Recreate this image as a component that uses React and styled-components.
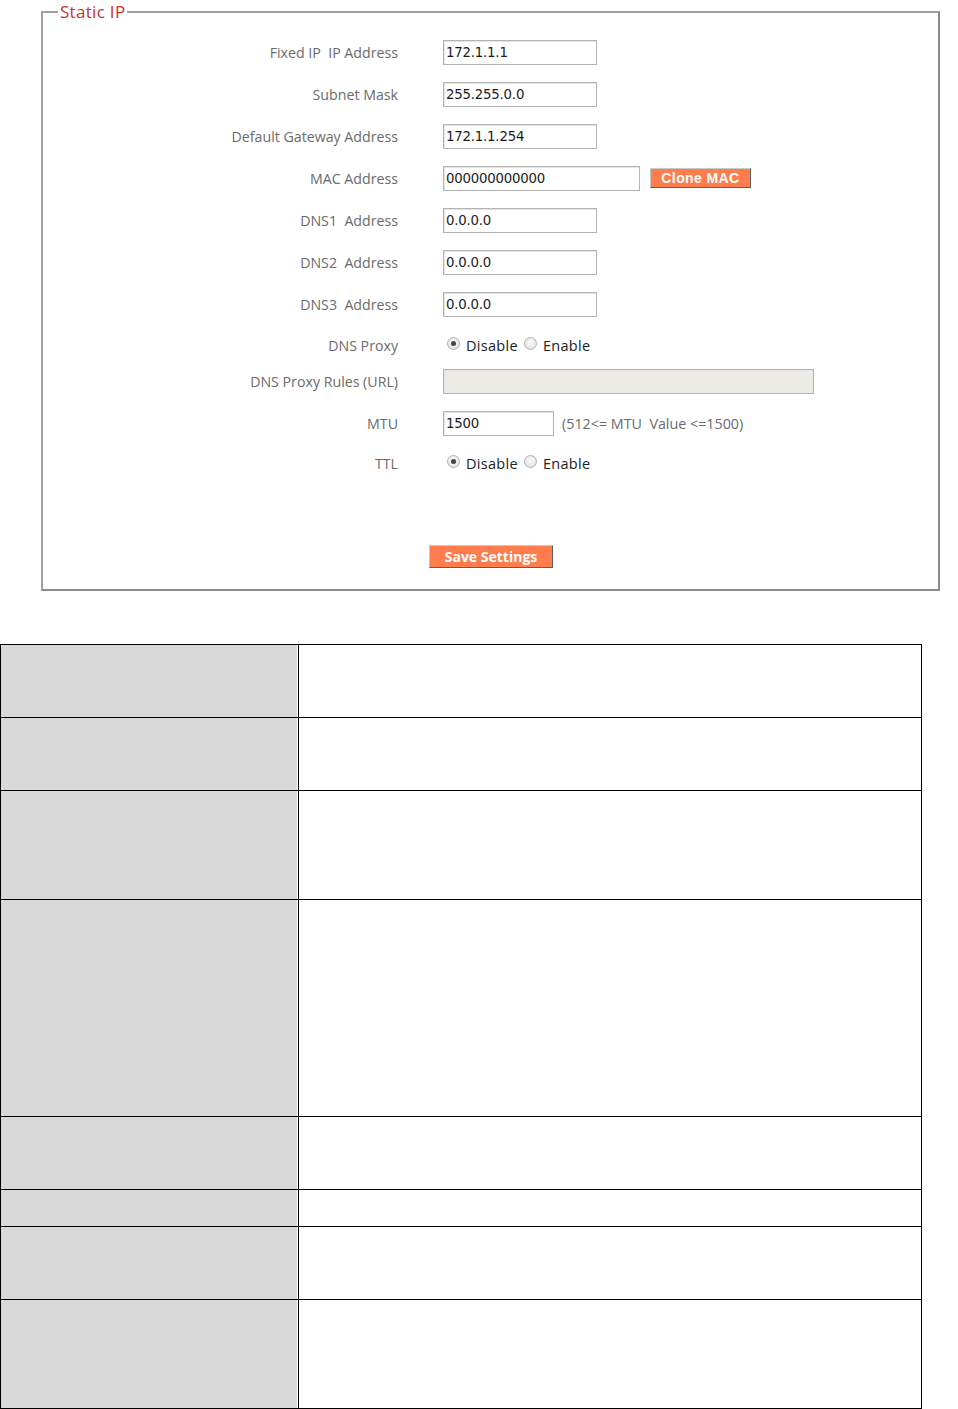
import React from "react";
import styled, { createGlobalStyle } from "styled-components";

const GlobalStyle = createGlobalStyle`
  body {
    margin: 0;
    background: #fff;
    font-family: "Open Sans", "Noto Sans", sans-serif;
  }
`;

const Page = styled.div`
  width: 958px;
  padding-top: 1px;
`;

const FieldsetWrap = styled.div`
  padding-left: 41px;
`;

const Fieldset = styled.fieldset`
  width: 899px;
  box-sizing: border-box;
  margin: 0;
  padding: 8px 0 21px 0;
  border: 2px solid #9c9c9c;
  border-color: #a0a0a0 #8a8a8a #8a8a8a #a0a0a0;
  min-width: 0;
`;

const Legend = styled.legend`
  margin-left: 15px;
  padding: 0 2px;
  color: #c8322a;
  font-size: 17px;
  line-height: 22px;
  letter-spacing: 0.3px;
`;

const FormGrid = styled.div`
  display: grid;
  grid-template-columns: 355px 1fr;
  column-gap: 45px;
`;

const Label = styled.div`
  height: ${(p) => p.h || 42}px;
  display: flex;
  align-items: center;
  justify-content: flex-end;
  color: #6b6b6b;
  font-size: 14.2px;
  white-space: pre;
`;

const Value = styled.div`
  height: ${(p) => p.h || 42}px;
  display: flex;
  align-items: center;
  gap: 10px;
`;

const TextInput = styled.div`
  width: ${(p) => p.w || 154}px;
  height: 25px;
  box-sizing: border-box;
  border: 1px solid #b4b4b4;
  box-shadow: inset 1px 1px 0 #e4e4e4;
  background: ${(p) => (p.disabled ? "#ecebe6" : "#fff")};
  display: flex;
  align-items: center;
  padding-left: 2px;
  font-family: "DejaVu Sans", Verdana, sans-serif;
  font-size: 13.3px;
  color: #1c1c1c;
  letter-spacing: -0.2px;
`;

const OrangeButton = styled.div`
  height: ${(p) => p.h || 20}px;
  width: ${(p) => p.w}px;
  box-sizing: border-box;
  background: #ff7d4d;
  border: 1px solid #c9c9c9;
  border-right-color: #5e5e5e;
  border-bottom-color: #5e5e5e;
  color: #fff;
  font-weight: bold;
  font-size: ${(p) => p.fs || 14}px;
  font-family: ${(p) => p.font || '"Liberation Sans", Arial, sans-serif'};
  letter-spacing: ${(p) => p.ls || 0}px;
  display: flex;
  align-items: center;
  justify-content: center;
`;

const Hint = styled.span`
  color: #6b6b6b;
  font-size: 14.3px;
  margin-left: -2px;
`;

const RadioGroup = styled.div`
  display: flex;
  align-items: center;
  padding-left: 4px;
  font-size: 14.5px;
  color: #222;
`;

const Radio = styled.span`
  width: 13px;
  height: 13px;
  box-sizing: border-box;
  border-radius: 50%;
  border: 1px solid #b0b0b0;
  background: radial-gradient(circle at 50% 40%, #fbfbfb 0%, #dcdcdc 100%);
  position: relative;
  margin-right: 6px;
  margin-top: -4px;
  &::after {
    content: "";
    display: ${(p) => (p.checked ? "block" : "none")};
    position: absolute;
    left: 3px;
    top: 3px;
    width: 5px;
    height: 5px;
    border-radius: 50%;
    background: #444;
  }
`;

const RadioText = styled.span`
  margin-right: 6px;
  letter-spacing: 0.3px;
`;

const SaveRow = styled.div`
  display: flex;
  padding-left: 386px;
  margin-top: 68px;
`;

const Table = styled.table`
  margin-top: 53px;
  width: 922px;
  border-collapse: collapse;
  table-layout: fixed;
`;

const LeftCell = styled.td`
  width: 298px;
  height: ${(p) => p.h}px;
  box-sizing: border-box;
  background: #d9d9d9;
  border: 1px solid #000;
  box-shadow: inset -1px 0 0 #fff;
  padding: 0;
`;

const RightCell = styled.td`
  border: 1px solid #000;
  padding: 0;
`;

const fields = [
  { label: "Fixed IP  IP Address", value: "172.1.1.1" },
  { label: "Subnet Mask", value: "255.255.0.0" },
  { label: "Default Gateway Address", value: "172.1.1.254" },
  { label: "MAC Address", value: "000000000000", w: 197, clone: true },
  { label: "DNS1  Address", value: "0.0.0.0" },
  { label: "DNS2  Address", value: "0.0.0.0" },
  { label: "DNS3  Address", value: "0.0.0.0" },
];

const rowHeights = [73, 73, 109, 217, 73, 37, 73, 109];

function Radios() {
  return (
    <RadioGroup>
      <Radio checked />
      <RadioText>Disable</RadioText>
      <Radio />
      <RadioText>Enable</RadioText>
    </RadioGroup>
  );
}

export default function App() {
  return (
    <Page>
      <GlobalStyle />
      <FieldsetWrap>
        <Fieldset>
          <Legend>Static IP</Legend>
          <FormGrid>
            {fields.map((f) => (
              <React.Fragment key={f.label}>
                <Label>{f.label}</Label>
                <Value>
                  <TextInput w={f.w}>{f.value}</TextInput>
                  {f.clone && <OrangeButton w={101} ls={0.4}>Clone MAC</OrangeButton>}
                </Value>
              </React.Fragment>
            ))}
            <Label h={40}>DNS Proxy</Label>
            <Value h={40}>
              <Radios />
            </Value>
            <Label h={32}>DNS Proxy Rules (URL)</Label>
            <Value h={32}>
              <TextInput w={371} disabled />
            </Value>
            <Label h={52}>MTU</Label>
            <Value h={52}>
              <TextInput w={111}>1500</TextInput>
              <Hint>(512&lt;= MTU&nbsp; Value &lt;=1500)</Hint>
            </Value>
            <Label h={28}>TTL</Label>
            <Value h={28}>
              <Radios />
            </Value>
          </FormGrid>
          <SaveRow>
            <OrangeButton w={124} h={23} fs={14} font={'"Open Sans", sans-serif'}>
              Save Settings
            </OrangeButton>
          </SaveRow>
        </Fieldset>
      </FieldsetWrap>
      <Table>
        <tbody>
          {rowHeights.map((h, i) => (
            <tr key={i}>
              <LeftCell h={h} />
              <RightCell />
            </tr>
          ))}
        </tbody>
      </Table>
    </Page>
  );
}
